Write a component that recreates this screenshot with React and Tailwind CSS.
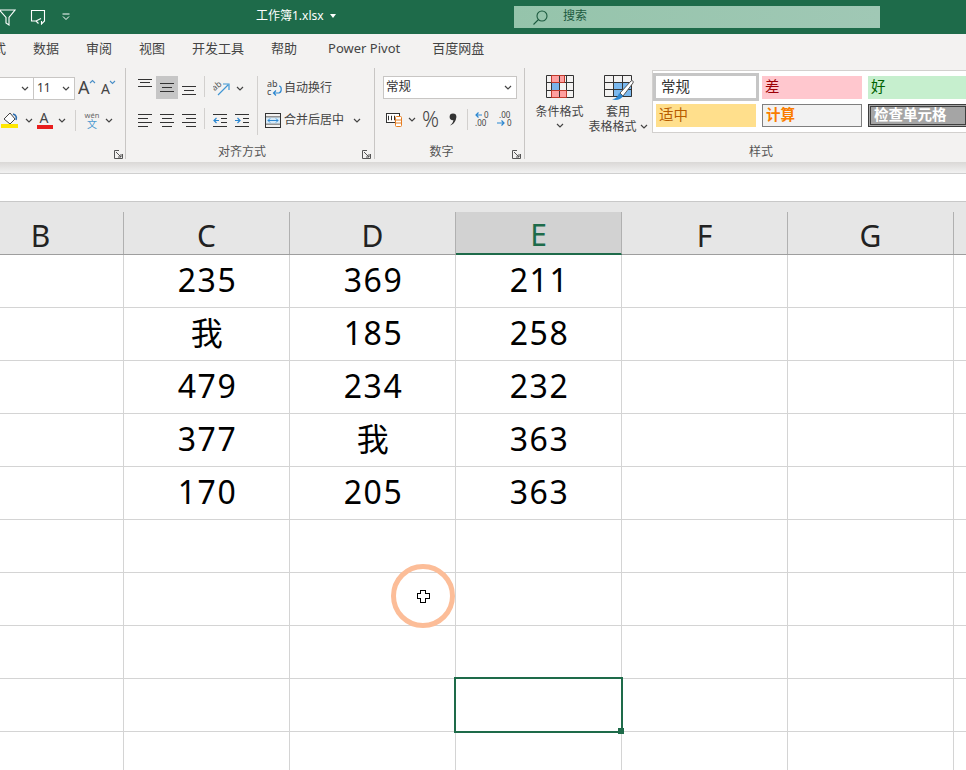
const CJK = '"Noto Sans","Noto Sans CJK SC",sans-serif';

function Chevron({ className = "" }) {
  return (
    <svg width="8" height="5" viewBox="0 0 8 5" className={`shrink-0 ${className}`} fill="none" stroke="#444" strokeWidth="1.2">
      <path d="M1 1l3 3 3-3" />
    </svg>
  );
}

function Lines({ rows, w = 14, h = 12 }) {
  return (
    <svg width={w} height={h} viewBox={`0 0 ${w} ${h}`} fill="none" stroke="#333" strokeWidth="1" className="block shrink-0">
      {rows.map(([x1, x2, y], i) => (
        <path key={i} d={`M${x1} ${y + 0.5}H${x2}`} />
      ))}
    </svg>
  );
}

function Launcher() {
  return (
    <svg width="9" height="9" viewBox="0 0 9 9" fill="none" stroke="#555" strokeWidth="1" className="block">
      <path d="M8.5 4V8.5H.5V.5H5" />
      <path d="M2 2l5 5M4 7h3V4" />
    </svg>
  );
}

function VSep({ className = "" }) {
  return <div className={`w-px shrink-0 bg-[#d2d0ce] ${className}`} />;
}

function GroupLabel({ children }) {
  return (
    <div className="absolute bottom-0 left-0 right-0 h-[14px]">
      <div className="pr-[16px] text-center text-[12px] leading-[14px] text-[#555]">{children}</div>
      <div className="absolute bottom-0 right-[3px]">
        <Launcher />
      </div>
    </div>
  );
}

function FontGroup() {
  return (
    <div className="relative h-[91px] w-[126px] shrink-0 border-r border-[#c8c6c4] pt-[8px]">
      <div className="flex h-[24px] items-center">
        <div className="flex h-[23px] w-[34px] items-center justify-end border border-l-0 border-[#c8c6c4] bg-white pr-[4px]">
          <Chevron />
        </div>
        <div className="flex h-[23px] w-[41px] items-center justify-between border border-l-0 border-[#c8c6c4] bg-white pl-[3px] pr-[4px] text-[12px] text-[#333]">
          <span>11</span>
          <Chevron />
        </div>
        <svg width="40" height="18" viewBox="0 0 40 18" fill="none" className="ml-[3px]">
          <text x="0" y="15" fontSize="18" fill="#444" fontFamily="Noto Sans">A</text>
          <path d="M12 4l2.5-2.5L17 4" stroke="#4a8fc7" strokeWidth="1.1" />
          <text x="23" y="15" fontSize="14" fill="#444" fontFamily="Noto Sans">A</text>
          <path d="M32 2l2.5 2.5L37 2" stroke="#4a8fc7" strokeWidth="1.1" />
        </svg>
      </div>
      <div className="mt-[8px] flex h-[24px] items-center">
        <svg width="18" height="20" viewBox="0 0 18 20" fill="none" className="ml-[1px]">
          <path d="M3 9l6-6 5 6-5 5z" stroke="#444" strokeWidth="1" fill="#fff" />
          <path d="M12 4c3 1 4 3 3 6" stroke="#2f6fb0" strokeWidth="1.6" />
          <rect x="0" y="14" width="17" height="4" fill="#ffe600" />
        </svg>
        <Chevron className="ml-[6px]" />
        <svg width="16" height="19" viewBox="0 0 16 19" className="ml-[4px]">
          <text x="2.5" y="12" fontSize="14" fill="#444" fontFamily="Noto Sans">A</text>
          <rect x="0" y="14" width="16" height="4" fill="#e81d1d" />
        </svg>
        <Chevron className="ml-[5px]" />
        <VSep className="ml-[9px] h-[21px]" />
        <div className="ml-[8px] flex w-[16px] flex-col items-center">
          <span className="text-[7.5px] leading-[8px] text-[#666]">wén</span>
          <span className="text-[10px] leading-[11px] text-[#4a9ad0]">文</span>
        </div>
        <Chevron className="ml-[5px]" />
      </div>
      <div className="absolute bottom-0 right-[2px]">
        <Launcher />
      </div>
    </div>
  );
}

function AlignGroup() {
  return (
    <div className="relative flex h-[91px] w-[249px] shrink-0 border-r border-[#c8c6c4] pl-[12px] pt-[8px]">
      <div className="flex w-[66px] flex-col">
        <div className="flex h-[24px] items-start">
          <div className="mt-[3px]"><Lines rows={[[0, 14, 0], [2, 12, 3], [0, 14, 7]]} h={8} /></div>
          <div className="ml-[4px] flex h-[23px] w-[22px] items-center justify-center bg-[#c6c6c6]">
            <Lines rows={[[0, 14, 1], [2, 12, 5], [0, 14, 9]]} h={11} />
          </div>
          <div className="ml-[4px] mt-[10px]"><Lines rows={[[0, 14, 0], [2, 12, 4], [0, 14, 8]]} h={10} /></div>
        </div>
        <div className="mt-[8px] flex h-[24px] items-center gap-[8px]">
          <Lines rows={[[0, 14, 0], [0, 10, 4], [0, 14, 8], [0, 10, 12]]} h={13} />
          <Lines rows={[[0, 14, 0], [2, 12, 4], [0, 14, 8], [2, 12, 12]]} h={13} />
          <Lines rows={[[0, 14, 0], [4, 14, 4], [0, 14, 8], [4, 14, 12]]} h={13} />
        </div>
      </div>
      <div className="flex flex-col">
        <VSep className="h-[21px]" />
        <VSep className="mt-[11px] h-[21px]" />
      </div>
      <div className="flex w-[52px] flex-col pl-[8px]">
        <div className="flex h-[24px] items-center">
          <svg width="17" height="17" viewBox="0 0 17 17" fill="none">
            <text x="0" y="9" fontSize="8.5" fill="#555" transform="rotate(-40 4 8)" fontFamily="Noto Sans">ab</text>
            <path d="M5 15L15 5M10 4h6v6" stroke="#3f96d4" strokeWidth="1.2" />
          </svg>
          <Chevron className="ml-[6px]" />
        </div>
        <div className="mt-[8px] flex h-[24px] items-center gap-[8px]">
          <svg width="14" height="13" viewBox="0 0 14 13" fill="none" stroke="#333">
            <path d="M0 .5H14M8 4.5H14M8 8.5H14M0 12.5H14" />
            <path d="M6 6.5H1M3.5 4L1 6.5 3.5 9" stroke="#2b87d1" strokeWidth="1.2" />
          </svg>
          <svg width="14" height="13" viewBox="0 0 14 13" fill="none" stroke="#333">
            <path d="M0 .5H14M8 4.5H14M8 8.5H14M0 12.5H14" />
            <path d="M0 6.5H5M2.5 4L5 6.5 2.5 9" stroke="#2b87d1" strokeWidth="1.2" />
          </svg>
        </div>
      </div>
      <VSep className="h-[59px]" />
      <div className="flex flex-col pl-[7px]">
        <div className="flex h-[24px] items-center text-[12px] text-[#444]">
          <svg width="16" height="18" viewBox="0 0 16 18" fill="none" className="ml-[2px]">
            <text x="0" y="8" fontSize="9" fill="#444" fontFamily="Noto Sans">ab</text>
            <text x="0" y="16" fontSize="9" fill="#444" fontFamily="Noto Sans">c</text>
            <path d="M12 7c3 0 3 6 0 7H7M9 11.5L6.5 14 9 16.5" stroke="#2b87d1" strokeWidth="1.2" />
          </svg>
          <span className="ml-[1px]">自动换行</span>
        </div>
        <div className="mt-[8px] flex h-[24px] items-center text-[12px] text-[#444]">
          <svg width="16" height="15" viewBox="0 0 16 15" fill="none">
            <rect x=".5" y=".5" width="15" height="14" stroke="#333" />
            <path d="M.5 4H15.5M.5 11H15.5" stroke="#333" />
            <rect x="1" y="4.5" width="14" height="6" fill="#d6eaf8" />
            <path d="M3 7.5H13M5 5.5L3 7.5 5 9.5M11 5.5L13 7.5 11 9.5" stroke="#2b87d1" />
          </svg>
          <span className="ml-[3px]">合并后居中</span>
          <Chevron className="ml-[9px]" />
        </div>
      </div>
      <GroupLabel>对齐方式</GroupLabel>
    </div>
  );
}

function NumberGroup() {
  return (
    <div className="relative h-[91px] w-[150px] shrink-0 border-r border-[#c8c6c4] pl-[8px] pt-[8px]">
      <div className="flex h-[23px] w-[134px] items-center justify-between border border-[#c8c6c4] bg-white pl-[2px] pr-[4px] text-[12.5px] text-[#333]">
        <span>常规</span>
        <Chevron />
      </div>
      <div className="mt-[8px] flex h-[24px] items-center">
        <svg width="17" height="16" viewBox="0 0 17 16" fill="none" className="ml-[3px]">
          <rect x=".5" y="2.5" width="13" height="9" stroke="#333" fill="#fff" />
          <path d="M3 5H2.5V9H3M6 5H5.5V9H6M9 5H8.5V9H9" stroke="#333" />
          <rect x="9.5" y="5.5" width="6" height="10" rx="1" stroke="#e67e22" fill="#fff" />
          <path d="M10 9H15M10 12H15" stroke="#e67e22" />
        </svg>
        <Chevron className="ml-[5px]" />
        <span className="ml-[6px] w-[16px] text-center text-[21px] font-light leading-[24px] text-[#444]">%</span>
        <svg width="9" height="13" viewBox="0 0 9 13" className="ml-[10px]">
          <circle cx="5" cy="3.8" r="3.4" fill="#333" />
          <path d="M8 3.5C8.5 8 5.5 11.5 2 12.5 4.5 10.5 5.5 8.5 5.5 6z" fill="#333" />
        </svg>
        <VSep className="ml-[10px] h-[21px]" />
        <svg width="18" height="18" viewBox="0 0 18 18" fill="none" className="ml-[6px]">
          <path d="M8 5H2M4.5 2.5L2 5 4.5 7.5" stroke="#2b87d1" strokeWidth="1.2" />
          <text x="10" y="8" fontSize="8" fill="#444" fontFamily="Noto Sans">0</text>
          <text x="1" y="16" fontSize="8" fill="#444" fontFamily="Noto Sans">.00</text>
        </svg>
        <svg width="18" height="18" viewBox="0 0 18 18" fill="none" className="ml-[4px]">
          <text x="3" y="8" fontSize="8" fill="#444" fontFamily="Noto Sans">.00</text>
          <path d="M1 13H8M5.5 10.5L8 13 5.5 15.5" stroke="#2b87d1" strokeWidth="1.2" />
          <text x="11" y="16" fontSize="8" fill="#444" fontFamily="Noto Sans">0</text>
        </svg>
      </div>
      <GroupLabel>数字</GroupLabel>
    </div>
  );
}

function CondIcon() {
  return (
    <svg width="28" height="23" viewBox="0 0 28 23" fill="none">
      <rect x="5" y="1" width="13" height="7" fill="#ff9f9f" />
      <rect x="5" y="15" width="15" height="7" fill="#ff9f9f" />
      <rect x="5" y="8" width="8" height="7" fill="#7ab3ea" />
      <path d="M.5.5h27v22H.5zM.5 7.5h27M.5 15.5h27M5.5.5v22M13.5.5v22M20.5.5v22" stroke="#333" />
      <path d="M5.5.5h13v7h-13zM5.5 15.5h15v7h-15z" stroke="#c0392b" />
    </svg>
  );
}

function TableIcon() {
  return (
    <svg width="32" height="28" viewBox="0 0 32 28" fill="none" className="translate-x-[2px]">
      <rect x="10" y="8" width="18" height="14" fill="#7ab8ee" />
      <path d="M.5.5h27v21H.5zM.5 7.5h27M.5 14.5h27M9.5.5v21M18.5.5v21" stroke="#333" />
      <path d="M16 18L27 6c1-1 3 0 2 2L19 21z" fill="#fff" stroke="#555" />
      <path d="M15 18c-1 4-4 6-7 6 3 2 9 1 11-3z" fill="#2b87d1" />
    </svg>
  );
}

function Style({ className, children }) {
  return <div className={`flex h-[23px] items-center overflow-hidden whitespace-nowrap pb-[2px] pl-[3px] text-[14.5px] ${className}`}>{children}</div>;
}

function StyleGroup() {
  return (
    <div className="relative flex h-[91px] grow pl-[10px] pt-[7px]">
      <div className="flex w-[117px] shrink-0 text-[12px] leading-[15px] text-[#444]">
        <div className="flex w-[49px] flex-col items-center">
          <CondIcon />
          <span className="mt-[6px]">条件格式</span>
          <Chevron className="mt-[4px]" />
        </div>
        <div className="ml-[2px] flex w-[64px] flex-col items-center">
          <TableIcon />
          <span className="mt-[1px]">套用</span>
          <span className="flex items-center gap-[3px] whitespace-nowrap">表格格式<Chevron /></span>
        </div>
      </div>
      <div className="-mt-[5px] h-[63px] grow border border-r-0 border-[#d2d0ce] bg-white">
        <div className="grid grid-cols-[109px_106px_100px] gap-y-[3px] pt-[2px]">
          <div className="flex h-[28px] w-[106px] items-center border-[3px] border-[#c6c6c6] bg-white pl-[5px] text-[14.5px] text-[#333]">常规</div>
          <Style className="mr-[6px] mt-[3px] bg-[#ffc7ce] text-[#9c0006]">差</Style>
          <Style className="mt-[3px] bg-[#c6efce] text-[#006100]">好</Style>
          <Style className="ml-[3px] mr-[6px] bg-[#ffdf8c] text-[#b85c00]">适中</Style>
          <Style className="mr-[6px] border border-[#7f7f7f] bg-[#f2f2f2] font-bold text-[#fa7d00]">计算</Style>
          <Style className="border-[3px] border-double border-[#3f3f3f] bg-[#a5a5a5] font-bold text-white">检查单元格</Style>
        </div>
      </div>
      <div className="absolute bottom-0 left-[224px] text-[12px] leading-[14px] text-[#555]">样式</div>
    </div>
  );
}

const COLS = ["B", "C", "D", "E", "F", "G", ""];
const ROWS = [
  ["", "235", "369", "211", "", "", ""],
  ["", "我", "185", "258", "", "", ""],
  ["", "479", "234", "232", "", "", ""],
  ["", "377", "我", "363", "", "", ""],
  ["", "170", "205", "363", "", "", ""],
  ["", "", "", "", "", "", ""],
  ["", "", "", "", "", "", ""],
  ["", "", "", "", "", "", ""],
  ["", "", "", "", "", "", ""],
  ["", "", "", "", "", "", ""],
];

export default function App() {
  return (
    <div className="relative h-[770px] w-[966px] overflow-hidden bg-white" style={{ fontFamily: CJK }}>
      {/* title bar */}
      <div className="flex h-[34px] items-center bg-[#1e6b4a] text-white">
        <div className="flex w-[256px] items-center">
          <svg width="17" height="17" viewBox="0 0 17 17" fill="none" stroke="#fff" strokeWidth="1.1" className="-ml-[1px]">
            <path d="M.5 1H16L10 8.5V16L7 14V8.5z" />
          </svg>
          <svg width="16" height="16" viewBox="0 0 16 16" fill="none" stroke="#fff" strokeWidth="1.1" className="ml-[14px]">
            <path d="M6 12H1.5V1.5H14.5V12L11.5 15V12" />
            <path d="M11 9.5L6 12M6 12l2.5 2.5" />
          </svg>
          <svg width="8" height="8" viewBox="0 0 8 8" fill="none" stroke="#fff" strokeWidth="1" className="ml-[16px]">
            <path d="M.5 1h7M1 3.5L4 6.5 7 3.5" />
          </svg>
        </div>
        <div className="flex w-[258px] items-center pb-[2px] text-[12px]">
          <span>工作簿1.xlsx</span>
          <svg width="6" height="4" viewBox="0 0 6 4" className="ml-[6px]"><path d="M0 0h6L3 4z" fill="#fff" /></svg>
        </div>
        <div className="flex h-[22px] w-[366px] items-center bg-gradient-to-r from-[#95c4ab] to-[#a0c8b5] pl-[19px] text-[12px] text-[#1c5a3f]">
          <svg width="15" height="15" viewBox="0 0 15 15" fill="none" stroke="#1c5a3f" strokeWidth="1.1">
            <circle cx="9" cy="6" r="5" />
            <path d="M5.5 9.5L.5 14.5" />
          </svg>
          <span className="ml-[15px] -mt-[2px]">搜索</span>
        </div>
      </div>

      {/* tabs */}
      <div className="flex h-[32px] items-center overflow-hidden bg-[#f3f2f1] pb-[3px] text-[13px] text-[#444]">
        <span className="-ml-[7px] mr-[27px]">式</span>
        <span className="mr-[27px]">数据</span>
        <span className="mr-[27px]">审阅</span>
        <span className="mr-[27px]">视图</span>
        <span className="mr-[27px]">开发工具</span>
        <span className="mr-[31px]">帮助</span>
        <span className="mr-[32px]">Power Pivot</span>
        <span>百度网盘</span>
      </div>

      {/* ribbon */}
      <div className="flex h-[96px] overflow-hidden bg-[#f3f2f1] pt-[2px]">
        <FontGroup />
        <AlignGroup />
        <NumberGroup />
        <StyleGroup />
      </div>

      {/* ribbon shadow */}
      <div className="h-[12px] border-b border-[#cfcfcf] bg-gradient-to-b from-[#dad8d6] to-[#f2f2f2]" />

      {/* formula bar */}
      <div className="h-[28px] border-b border-[#c8c8c8] bg-white" />

      {/* column header */}
      <div className="h-[53px] bg-[#e6e6e6] pt-[10px]">
        <div className="-ml-[42px] grid h-[43px] grid-cols-[repeat(7,166px)] border-b border-[#9e9e9e]">
          {COLS.map((c) => (
            <div
              key={c}
              className={`flex items-center justify-center border-r border-[#b0b0b0] pt-[5px] text-[30px] leading-none ${
                c === "E" ? "-mb-px border-b-2 border-b-[#1e6b4a] bg-[#d2d2d2] text-[#1e6b4a]" : "text-[#222]"
              }`}
            >
              {c}
            </div>
          ))}
        </div>
      </div>

      {/* cells */}
      <div className="-ml-[42px] grid auto-rows-[53px] grid-cols-[repeat(7,166px)] text-[32px] text-black">
        {ROWS.flatMap((r, i) =>
          r.map((v, j) => (
            <div key={`${i}-${j}`} className="flex items-center justify-center border-b border-r border-[#d4d4d4] pb-[2px] pl-[2px] tracking-[1.5px]">
              {v}
            </div>
          ))
        )}
      </div>

      {/* selection */}
      <div className="absolute left-[454px] top-[677px] h-[56px] w-[169px] border-2 border-[#1e6b4a]">
        <div className="absolute -bottom-[3px] -right-[3px] h-[6px] w-[6px] bg-[#1e6b4a]" />
      </div>

      {/* click ring and cursor */}
      <div className="absolute left-[391px] top-[564px] flex h-[64px] w-[64px] items-center justify-center rounded-full border-[5px] border-[#fcbd98]">
        <svg width="15" height="15" viewBox="0 0 15 15" fill="#fff" stroke="#000" strokeWidth="1.2" shapeRendering="crispEdges">
          <path d="M4.5 1.5h5v3h4v5h-4v4h-5v-4h-3v-5h3z" />
        </svg>
      </div>
    </div>
  );
}
